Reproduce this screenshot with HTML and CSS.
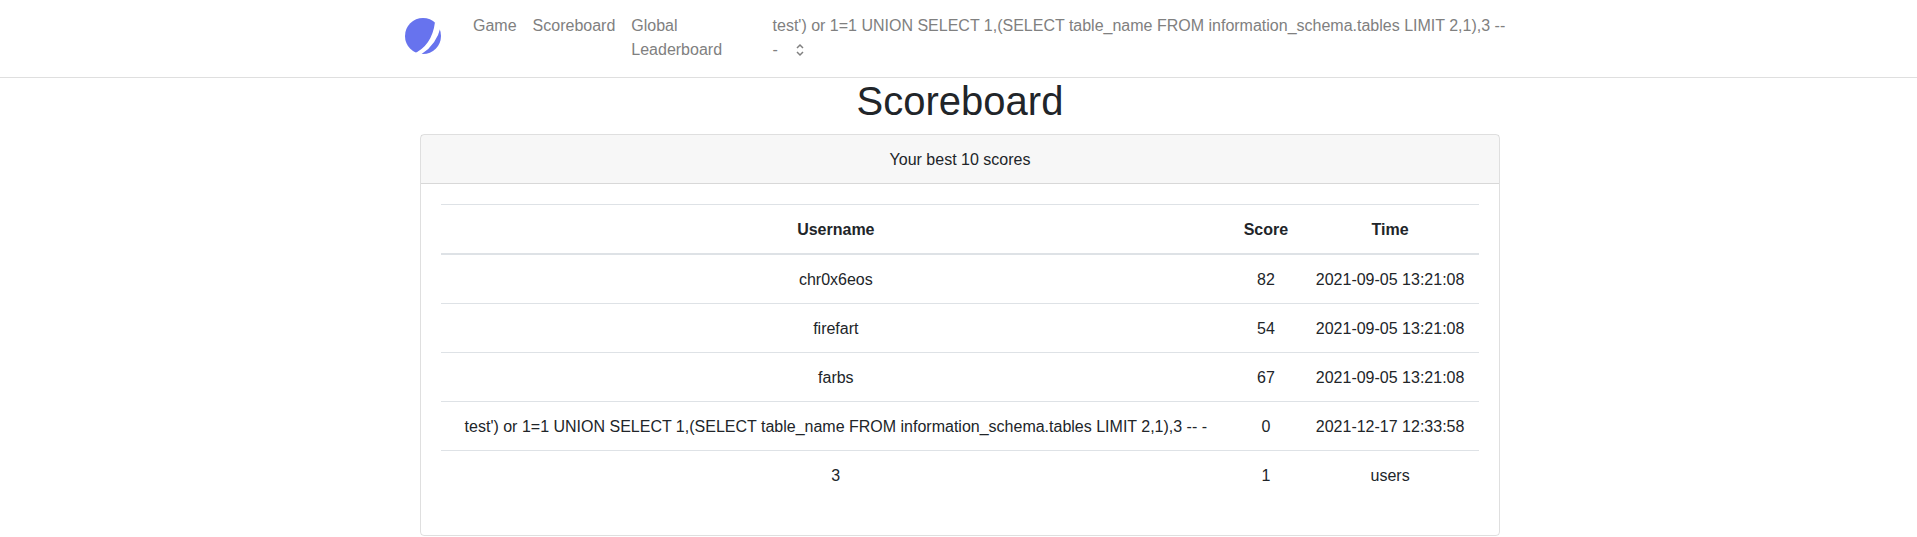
FILE: index.html
```html
<!DOCTYPE html>
<html lang="en">
<head>
  <meta charset="UTF-8" />
  <meta name="viewport" content="width=device-width, initial-scale=1.0"/>
  <title>Scoreboard</title>
  <link rel="stylesheet" href="styles.css">
</head>
<body>
  <nav class="navbar">
    <div class="nav-inner">
      <a class="brand" href="#">
        <svg class="logo" viewBox="0 0 36 36" width="36" height="36">
          <circle cx="18" cy="18" r="18" fill="#6773ee"/>
          <path d="M8 36 Q27 28 30 4 L36 8 Q31 29 13 38 Z" fill="#fff"/>
        </svg>
      </a>
      <ul class="nav-links">
        <li><a href="#">Game</a></li>
        <li><a href="#">Scoreboard</a></li>
        <li class="wrap"><a href="#">Global Leaderboard</a></li>
      </ul>
      <a class="user" href="#">test') or 1=1 UNION SELECT 1,(SELECT table_name FROM information_schema.tables LIMIT 2,1),3 -- -<svg class="caret" viewBox="0 0 10 16" width="10" height="16"><path d="M2 6 L5 3 L8 6 M2 10 L5 13 L8 10" fill="none" stroke="#808080" stroke-width="1.5"/></svg></a>
    </div>
  </nav>

  <main class="content">
    <h1>Scoreboard</h1>

    <div class="card">
      <div class="card-header">Your best 10 scores</div>
      <div class="card-body">
        <table>
          <thead>
            <tr><th>Username</th><th>Score</th><th>Time</th></tr>
          </thead>
          <tbody>
            <tr><td>chr0x6eos</td><td>82</td><td>2021-09-05 13:21:08</td></tr>
            <tr><td>firefart</td><td>54</td><td>2021-09-05 13:21:08</td></tr>
            <tr><td>farbs</td><td>67</td><td>2021-09-05 13:21:08</td></tr>
            <tr><td>test') or 1=1 UNION SELECT 1,(SELECT table_name FROM information_schema.tables LIMIT 2,1),3 -- -</td><td>0</td><td>2021-12-17 12:33:58</td></tr>
            <tr><td>3</td><td>1</td><td>users</td></tr>
          </tbody>
        </table>
      </div>
    </div>
  </main>
</body>
</html>
```

FILE: styles.css
```css
* { box-sizing: border-box; }
body { margin: 0; font-family: "Liberation Sans", Arial, sans-serif; font-size: 16px; line-height: 24px; color: #212529; background: #fff; }
a { color: inherit; text-decoration: none; }

.navbar { border-bottom: 1px solid #dfdfdf; height: 78px; }
.nav-inner { width: 1140px; margin: 0 auto; padding: 14px 15px 0; display: flex; align-items: flex-start; }
.brand { display: flex; margin-top: 4px; margin-left: 1px; margin-right: 24.5px; }
.logo { display: block; }
.nav-links { list-style: none; margin: 0; padding: 0; display: flex; color: #808080; }
.nav-links li { padding: 0 8px; }
.nav-links .wrap { width: min-content; }
.user { margin-left: 42.5px; color: #808080; flex: 1; }
.caret { display: inline-block; vertical-align: -3px; margin-left: 17px; }

.content { padding-left: 3px; }
h1 { margin: -1px 0 9px; font-size: 40px; font-weight: 500; line-height: 48px; text-align: center; }

.card { width: 1080px; margin: 0 auto; border: 1px solid rgba(0,0,0,.125); border-radius: 4px; }
.card-header { padding: 13px 20px 11px; text-align: center; background: rgba(0,0,0,.03); border-bottom: 1px solid rgba(0,0,0,.125); }
.card-body { padding: 20px; }
table { width: 100%; border-collapse: collapse; margin-bottom: 16px; text-align: center; }
th, td { padding: 13px 12px 11px; border-top: 1px solid #dee2e6; }
th { border-bottom: 2px solid #dee2e6; }
```
